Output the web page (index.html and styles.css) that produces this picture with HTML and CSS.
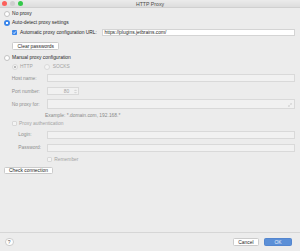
FILE: index.html
```html
<!DOCTYPE html>
<html lang="en">
<head>
    <meta charset="UTF-8">
    <meta name="viewport" content="width=device-width, initial-scale=1.0">
    <title>HTTP Proxy</title>
    <link rel="stylesheet" href="styles.css">
</head>
<body>
    <div class="dialog">
        <header class="titlebar">
            <div class="lights">
                <span class="light light-close"></span>
                <span class="light light-min"></span>
                <span class="light light-zoom"></span>
            </div>
            <div class="title">HTTP Proxy</div>
        </header>

        <main class="content">
            <label class="row row-noproxy"><span class="radio"></span>No proxy</label>
            <label class="row row-auto"><span class="radio checked"></span>Auto-detect proxy settings</label>

            <div class="auto">
                <div class="row row-url">
                    <span class="check checked">
                        <svg viewBox="0 0 10 10" width="5" height="5"><path d="M2.2 5.2 L4.2 7.2 L7.9 2.8" fill="none" stroke="#fff" stroke-width="1.6"/></svg>
                    </span>
                    <span class="url-label">Automatic proxy configuration URL:</span>
                    <span class="input input-url">https://plugins.jetbrains.com/</span>
                </div>
                <button class="btn btn-clear">Clear passwords</button>
            </div>

            <label class="row row-manual"><span class="radio"></span>Manual proxy configuration</label>

            <div class="manual">
                <div class="row row-proto">
                    <span class="opt off"><span class="radio checked-off"></span>HTTP</span>
                    <span class="opt opt-socks off"><span class="radio radio-off"></span>SOCKS</span>
                </div>
                <div class="field row-host">
                    <span class="label">Host name:</span>
                    <span class="input input-off"></span>
                </div>
                <div class="field row-port">
                    <span class="label">Port number:</span>
                    <span class="input input-off input-port">
                        <span class="port-value">80</span>
                        <svg class="spinner" viewBox="0 0 6 10" width="3" height="5"><path d="M1 4 L3 1.8 L5 4 M1 6 L3 8.2 L5 6" fill="none" stroke="#a9a9a9" stroke-width="0.9"/></svg>
                    </span>
                </div>
                <div class="field row-noproxy-for">
                    <span class="label">No proxy for:</span>
                    <span class="input input-off input-area">
                        <svg class="expand" viewBox="0 0 10 10" width="4" height="4"><path d="M5.5 1.5 H8.5 V4.5 M8.5 1.5 L5.5 4.5 M4.5 8.5 H1.5 V5.5 M1.5 8.5 L4.5 5.5" fill="none" stroke="#b8b8b8" stroke-width="1"/></svg>
                    </span>
                </div>
                <div class="field row-example">
                    <span class="label"></span>
                    <span class="example">Example: *.domain.com, 192.168.*</span>
                </div>
                <div class="row row-auth off">
                    <span class="check check-off"></span>Proxy authentication
                </div>
                <div class="field field-sub row-login">
                    <span class="label">Login:</span>
                    <span class="input input-off"></span>
                </div>
                <div class="field field-sub row-password">
                    <span class="label">Password:</span>
                    <span class="input input-off"></span>
                </div>
                <div class="field row-remember">
                    <span class="label"></span>
                    <span class="row off"><span class="check check-off"></span>Remember</span>
                </div>
            </div>

            <button class="btn btn-check">Check connection</button>
        </main>

        <footer class="footer">
            <span class="help">?</span>
            <div class="actions">
                <button class="btn btn-cancel">Cancel</button>
                <button class="btn btn-ok">OK</button>
            </div>
        </footer>
    </div>
</body>
</html>
```

FILE: styles.css
```css
* {
    margin: 0;
    padding: 0;
    box-sizing: border-box;
}

html,
body {
    width: 300px;
    height: 251px;
    overflow: hidden;
}

body {
    background: #ececec;
    font-family: "Liberation Sans", Arial, sans-serif;
    font-size: 4.9px;
    color: #262626;
}

.dialog {
    display: flex;
    flex-direction: column;
    height: 251px;
}

/* title bar */
.titlebar {
    height: 8px;
    display: grid;
    grid-template-columns: 1fr auto 1fr;
    align-items: center;
    background: linear-gradient(#ebebeb, #dddddd);
    border-bottom: 1px solid #d0d0d0;
}

.lights {
    display: flex;
    gap: 3px;
    padding-left: 1.5px;
}

.light {
    width: 5px;
    height: 5px;
    border-radius: 50%;
}

.light-close { background: #fc605b; }
.light-min { background: #cfcfcf; }
.light-zoom { background: #34c84a; }

.title {
    font-size: 5.2px;
    color: #4a4a4a;
}

/* content */
.content {
    flex: 1;
    padding: 0 5.5px 0 3.5px;
}

.row {
    display: flex;
    align-items: center;
    gap: 2.6px;
    height: 7px;
}

.radio {
    width: 6px;
    height: 6px;
    border-radius: 50%;
    background: #fff;
    border: 1px solid #c2c2c2;
    flex: none;
}

.radio.checked {
    border: none;
    background: radial-gradient(circle, #fff 0 1px, #3c87ea 1.4px);
}

.radio-off {
    background: #f4f4f4;
    border-color: #dadada;
}

.checked-off {
    background: radial-gradient(circle, #b9b9b9 0 1px, #f4f4f4 1.4px);
    border-color: #dadada;
}

.check {
    width: 5px;
    height: 5px;
    border-radius: 1px;
    background: #fff;
    border: 1px solid #c2c2c2;
    flex: none;
    display: flex;
}

.check.checked {
    background: #3c87ea;
    border: none;
}

.check-off {
    background: #f4f4f4;
    border-color: #d8d8d8;
}

.off {
    color: #a3a3a3;
}

.row-noproxy { margin-top: 2px; }
.row-auto { margin-top: 2px; }

.auto {
    padding-left: 8.5px;
}

.row-url {
    margin-top: 3px;
    gap: 0;
}

.url-label {
    margin-left: 3px;
}

.input {
    flex: 1;
    height: 7px;
    background: #fff;
    border: 1px solid #d4d4d4;
    display: flex;
    align-items: center;
}

.input-url {
    margin-left: 5px;
    padding-left: 1.5px;
    color: #1e1e1e;
}

.input-off {
    height: 8px;
    background: #f1f1f1;
    border-color: #d9d9d9;
}

.btn {
    font-family: inherit;
    font-size: 4.9px;
    color: #262626;
    background: #fff;
    border: 1px solid #cbcbcb;
    border-radius: 1.5px;
    display: block;
}

.btn-clear {
    margin-top: 6px;
    margin-left: 0.3px;
    width: 47px;
    height: 8px;
}

.row-manual { margin-top: 4px; }

/* manual configuration */
.manual {
    padding-left: 8.2px;
}

.row-proto {
    margin-top: 2px;
    gap: 0;
}

.opt {
    display: flex;
    align-items: center;
    gap: 2.4px;
}

.opt-socks {
    margin-left: 11.5px;
}

.field {
    display: flex;
    align-items: center;
}

.label {
    width: 35px;
    flex: none;
    color: #8e8e8e;
}

.field-sub .label {
    padding-left: 6.6px;
}

.row-host { margin-top: 4px; }
.row-port { margin-top: 5px; }

.input-port {
    flex: none;
    width: 32.6px;
    justify-content: flex-end;
    padding-right: 1.5px;
}

.port-value {
    color: #a3a3a3;
    margin-right: 4.5px;
}

.row-noproxy-for {
    margin-top: 4px;
}

.input-area {
    height: 10px;
    justify-content: flex-end;
    align-items: flex-end;
    padding: 0 1.5px 1.5px 0;
}

.row-example {
    margin-top: 3px;
    height: 6px;
}

.example {
    margin-left: -1.7px;
    color: #8a8a8a;
}

.row-auth {
    margin-top: 2px;
    gap: 2.4px;
}

.row-login { margin-top: 3.5px; }
.row-password { margin-top: 5px; }

.row-remember {
    margin-top: 4px;
    height: 7px;
}

.btn-check {
    margin-top: 4px;
    margin-left: 0.8px;
    width: 48.4px;
    height: 7.5px;
}

/* footer */
.footer {
    height: 19px;
    border-top: 1px solid #d6d6d6;
    display: flex;
    align-items: center;
    justify-content: space-between;
    padding: 0 8.3px 0 5px;
}

.help {
    width: 8.5px;
    height: 8.5px;
    border-radius: 50%;
    background: #fff;
    border: 1px solid #cccccc;
    display: flex;
    align-items: center;
    justify-content: center;
    font-size: 5px;
    color: #555;
}

.actions {
    display: flex;
    gap: 5.3px;
}

.btn-cancel {
    width: 26.3px;
    height: 8px;
}

.btn-ok {
    width: 27.4px;
    height: 8px;
    background: #5b8fd7;
    border-color: #5486cf;
    color: #e8f0fb;
}
```
